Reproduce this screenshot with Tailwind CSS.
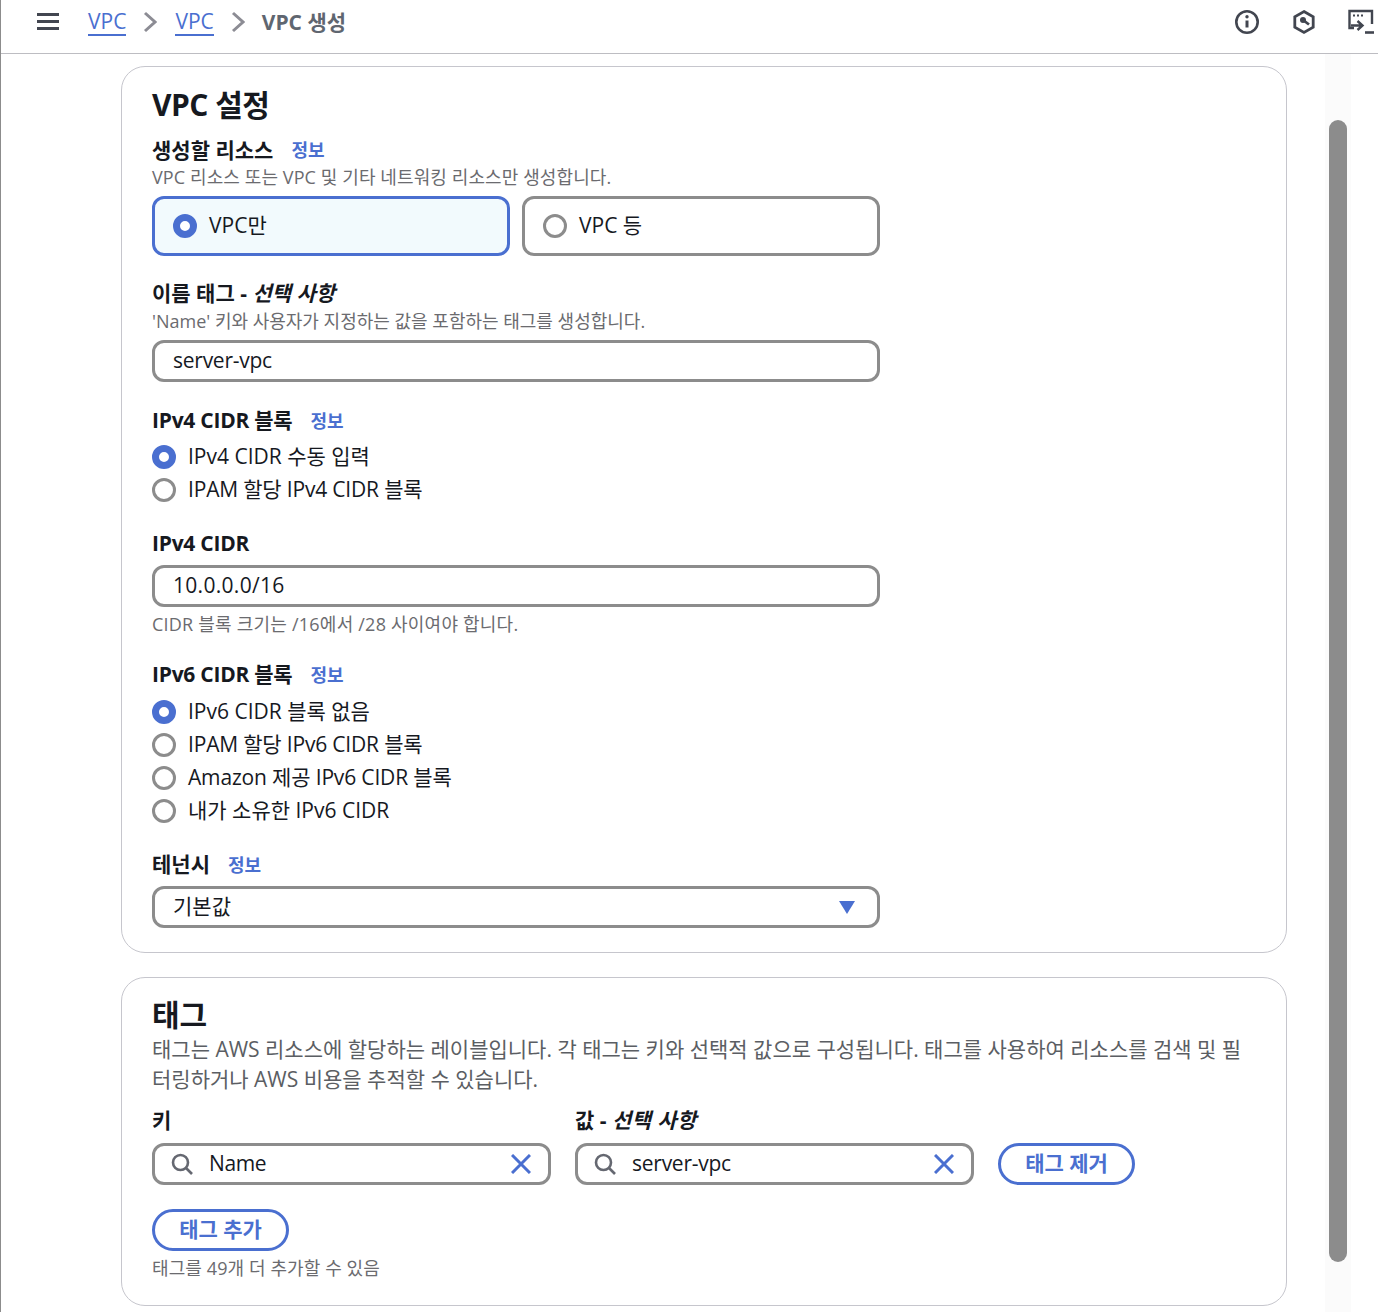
<!DOCTYPE html>
<html lang="ko">
<head>
    <meta charset="UTF-8">
    <title>VPC 생성</title>
    <script src="https://cdn.jsdelivr.net/npm/@tailwindcss/browser@4"></script>
</head>
<body class="bg-white overflow-hidden font-['Open_Sans','Noto_Sans_CJK_KR',sans-serif] text-[#16191f]">
<div class="relative h-[1312px] w-[1378px] border-l border-[#8c8c8c]">
    <!-- Top bar -->
    <header class="h-[54px] border-b border-[#bdbdc2] flex items-center pl-[36px] pr-[4px] pb-[9px]">
        <svg class="w-[24px] h-[20px] text-[#424650]" viewBox="0 0 24 20" fill="currentColor"><rect y="1" width="22" height="3"/><rect y="8" width="22" height="3"/><rect y="15" width="22" height="3"/></svg>
        <nav class="flex items-center ml-[27px] text-[21px] leading-[30px]">
            <a class="text-[#4a6fd0] border-b-2 border-[#4a6fd0] leading-[26px]">VPC</a>
            <svg class="w-[14px] h-[22px] ml-[17px] mr-[18px] text-[#8c8c94]" viewBox="0 0 14 22" fill="none" stroke="currentColor" stroke-width="3"><path d="M2 2l10 9-10 9"/></svg>
            <a class="text-[#4a6fd0] border-b-2 border-[#4a6fd0] leading-[26px]">VPC</a>
            <svg class="w-[14px] h-[22px] mx-[17px] text-[#8c8c94]" viewBox="0 0 14 22" fill="none" stroke="currentColor" stroke-width="3"><path d="M2 2l10 9-10 9"/></svg>
            <span class="font-bold text-[#5f6670]">VPC 생성</span>
        </nav>
        <div class="ml-auto flex items-center gap-[31px]">
            <svg class="w-[26px] h-[26px] text-[#424650]" viewBox="0 0 26 26" fill="none" stroke="currentColor" stroke-width="2.6"><circle cx="13" cy="13" r="10.7"/><path d="M13 11.5v7" stroke-width="3"/><circle cx="13" cy="7.8" r="1.7" fill="currentColor" stroke="none"/></svg>
            <svg class="w-[26px] h-[26px] text-[#424650]" viewBox="0 0 26 26" fill="none" stroke="currentColor" stroke-width="2.8"><path d="M13 2.500l9.200 5.200v10.600L13 23.500l-9.200-5.200V7.700z"/><circle cx="12" cy="11" r="3" fill="currentColor" stroke="none"/><path d="M12 11l6 4.500"/></svg>
            <svg class="w-[26px] h-[26px] text-[#424650]" viewBox="0 0 26 26" fill="none" stroke="currentColor" stroke-width="2.400"><path d="M6 19H1.500V2h22.500v13"/><path d="M5 6.500h2M9 6.500h2M13 6.500h2" stroke-width="2.200"/><path d="M9.500 12l5 4.500-5 4.500M3 16.500h11"/><path d="M17 23.500h9" stroke-width="2.600"/></svg>
        </div>
    </header>

    <!-- Overlay scrollbar -->
    <div class="absolute left-[1324px] top-[54px] w-[26px] h-[1258px] bg-[#fbfbfb]">
        <div class="absolute left-[4px] top-[66px] w-[18px] h-[1142px] rounded-full bg-[#8c8c8c]"></div>
    </div>

    <main class="pl-[120px] pt-[12px] w-[1286px] relative">
        <!-- VPC settings -->
        <section class="h-[887px] border border-[#c6c6cd] rounded-[24px] pl-[30px] pt-[18px]">
            <h2 class="text-[30px] leading-[40px] font-bold tracking-[-0.5px]">VPC 설정</h2>
            <div class="mt-[11px] flex items-center h-[29px]">
                <span class="text-[21px] font-bold">생성할 리소스</span>
                <a class="ml-[18px] text-[18px] font-bold text-[#4a6fd0]">정보</a>
            </div>
            <p class="-mt-[1px] text-[18px] leading-[26px] text-[#6b6b6f] tracking-[0.1px]">VPC 리소스 또는 VPC 및 기타 네트워킹 리소스만 생성합니다.</p>
            <div class="mt-[6px] flex gap-[12px] w-[728px]">
                <div class="w-[358px] h-[60px] rounded-[12px] border-[3px] border-[#4a6fd0] bg-[#f2fafd] flex items-center pl-[18px]">
                    <span class="w-[24px] h-[24px] rounded-full border-[7px] border-[#4a6fd0] bg-white"></span>
                    <span class="ml-[12px] text-[21px]">VPC만</span>
                </div>
                <div class="w-[358px] h-[60px] rounded-[12px] border-[3px] border-[#8c8c8c] flex items-center pl-[18px]">
                    <span class="w-[24px] h-[24px] rounded-full border-[3px] border-[#8c8c8c]"></span>
                    <span class="ml-[12px] text-[21px]">VPC 등</span>
                </div>
            </div>

            <div class="mt-[23px] h-[30px] flex items-center text-[21px] font-bold">이름 태그 -&nbsp;<i>선택 사항</i></div>
            <p class="-mt-[1px] text-[18px] leading-[26px] text-[#6b6b6f]">'Name' 키와 사용자가 지정하는 값을 포함하는 태그를 생성합니다.</p>
            <div class="mt-[6px] w-[728px] h-[42px] rounded-[12px] border-[3px] border-[#8c8c8c] flex items-center pl-[18px] text-[21px] tracking-[-0.25px]">server-vpc</div>

            <div class="mt-[23px] h-[32px] flex items-center">
                <span class="text-[21px] font-bold tracking-[-0.25px]">IPv4 CIDR 블록</span>
                <a class="ml-[18px] text-[18px] font-bold text-[#4a6fd0]">정보</a>
            </div>
            <div class="mt-[5px] flex flex-col gap-[3px] text-[21px]">
                <div class="h-[30px] flex items-center gap-[12px]"><span class="w-[24px] h-[24px] rounded-full border-[7px] border-[#4a6fd0] bg-white"></span>IPv4 CIDR 수동 입력</div>
                <div class="h-[30px] flex items-center gap-[12px] tracking-[-0.18px]"><span class="w-[24px] h-[24px] rounded-full border-[3px] border-[#8c8c8c]"></span>IPAM 할당 IPv4 CIDR 블록</div>
            </div>

            <div class="mt-[23px] h-[32px] flex items-center text-[21px] font-bold tracking-[-0.25px]">IPv4 CIDR</div>
            <div class="mt-[5px] w-[728px] h-[42px] rounded-[12px] border-[3px] border-[#8c8c8c] flex items-center pl-[18px] text-[21px] tracking-[0.3px]">10.0.0.0/16</div>
            <p class="mt-[4px] text-[18px] leading-[26px] text-[#6b6b6f] tracking-[0.22px]">CIDR 블록 크기는 /16에서 /28 사이여야 합니다.</p>

            <div class="mt-[22px] h-[32px] flex items-center">
                <span class="text-[21px] font-bold tracking-[-0.25px]">IPv6 CIDR 블록</span>
                <a class="ml-[18px] text-[18px] font-bold text-[#4a6fd0]">정보</a>
            </div>
            <div class="mt-[6px] flex flex-col gap-[3px] text-[21px]">
                <div class="h-[30px] flex items-center gap-[12px]"><span class="w-[24px] h-[24px] rounded-full border-[7px] border-[#4a6fd0] bg-white"></span>IPv6 CIDR 블록 없음</div>
                <div class="h-[30px] flex items-center gap-[12px] tracking-[-0.18px]"><span class="w-[24px] h-[24px] rounded-full border-[3px] border-[#8c8c8c]"></span>IPAM 할당 IPv6 CIDR 블록</div>
                <div class="h-[30px] flex items-center gap-[12px] tracking-[-0.16px]"><span class="w-[24px] h-[24px] rounded-full border-[3px] border-[#8c8c8c]"></span>Amazon 제공 IPv6 CIDR 블록</div>
                <div class="h-[30px] flex items-center gap-[12px]"><span class="w-[24px] h-[24px] rounded-full border-[3px] border-[#8c8c8c]"></span>내가 소유한 IPv6 CIDR</div>
            </div>

            <div class="mt-[23px] h-[32px] flex items-center">
                <span class="text-[21px] font-bold">테넌시</span>
                <a class="ml-[18px] text-[18px] font-bold text-[#4a6fd0]">정보</a>
            </div>
            <div class="mt-[5px] w-[728px] h-[42px] rounded-[12px] border-[3px] border-[#8c8c8c] flex items-center justify-between pl-[18px] pr-[22px] text-[21px]">
                기본값
                <svg class="w-[16px] h-[13px] text-[#4a6fd0] mt-[1px]" viewBox="0 0 16 13" fill="currentColor"><path d="M0 0h16L8 13z"/></svg>
            </div>
        </section>

        <!-- Tags -->
        <section class="mt-[24px] h-[329px] border border-[#c6c6cd] rounded-[24px] pl-[30px] pt-[18px]">
            <h2 class="text-[30px] leading-[38px] font-bold">태그</h2>
            <p class="w-[1100px] text-[21px] leading-[30px] text-[#5b5e63]">태그는 AWS 리소스에 할당하는 레이블입니다. 각 태그는 키와 선택적 값으로 구성됩니다. 태그를 사용하여 리소스를 검색 및 필터링하거나 AWS 비용을 추적할 수 있습니다.</p>
            <div class="mt-[11px] flex items-end">
                <div class="w-[399px]">
                    <div class="h-[32px] flex items-center text-[21px] font-bold">키</div>
                    <div class="mt-[6px] h-[42px] rounded-[12px] border-[3px] border-[#8c8c8c] flex items-center px-[18px] text-[21px]">
                        <svg class="w-[22px] h-[22px] text-[#656871] mr-[14px] -ml-[2px]" viewBox="0 0 22 22" fill="none" stroke="currentColor" stroke-width="2.6"><circle cx="9.500" cy="9.500" r="7.500"/><path d="M15 15l6 6"/></svg>
                        <span class="ml-[2px] tracking-[-0.4px]">Name</span>
                        <svg class="w-[20px] h-[20px] ml-auto -mr-[1px] text-[#4a6fd0]" viewBox="0 0 20 20" fill="none" stroke="currentColor" stroke-width="3"><path d="M1 1l18 18M19 1L1 19"/></svg>
                    </div>
                </div>
                <div class="w-[399px] ml-[24px]">
                    <div class="h-[32px] flex items-center text-[21px] font-bold"><span>값 -&nbsp;<i class="tracking-[0.4px]">선택 사항</i></span></div>
                    <div class="mt-[6px] h-[42px] rounded-[12px] border-[3px] border-[#8c8c8c] flex items-center px-[18px] text-[21px]">
                        <svg class="w-[22px] h-[22px] text-[#656871] mr-[14px] -ml-[2px]" viewBox="0 0 22 22" fill="none" stroke="currentColor" stroke-width="2.6"><circle cx="9.500" cy="9.500" r="7.500"/><path d="M15 15l6 6"/></svg>
                        <span class="ml-[2px] tracking-[-0.25px]">server-vpc</span>
                        <svg class="w-[20px] h-[20px] ml-auto -mr-[1px] text-[#4a6fd0]" viewBox="0 0 20 20" fill="none" stroke="currentColor" stroke-width="3"><path d="M1 1l18 18M19 1L1 19"/></svg>
                    </div>
                </div>
                <button class="ml-[24px] h-[42px] w-[137px] rounded-full border-[3px] border-[#4a6fd0] text-[21px] font-bold text-[#4a6fd0]">태그 제거</button>
            </div>
            <button class="mt-[24px] block h-[42px] w-[137px] rounded-full border-[3px] border-[#4a6fd0] text-[21px] font-bold text-[#4a6fd0]">태그 추가</button>
            <p class="mt-[4px] text-[18px] leading-[26px] text-[#6b6b6f] tracking-[0.1px]">태그를 49개 더 추가할 수 있음</p>
        </section>
    </main>
</div>
</body>
</html>
